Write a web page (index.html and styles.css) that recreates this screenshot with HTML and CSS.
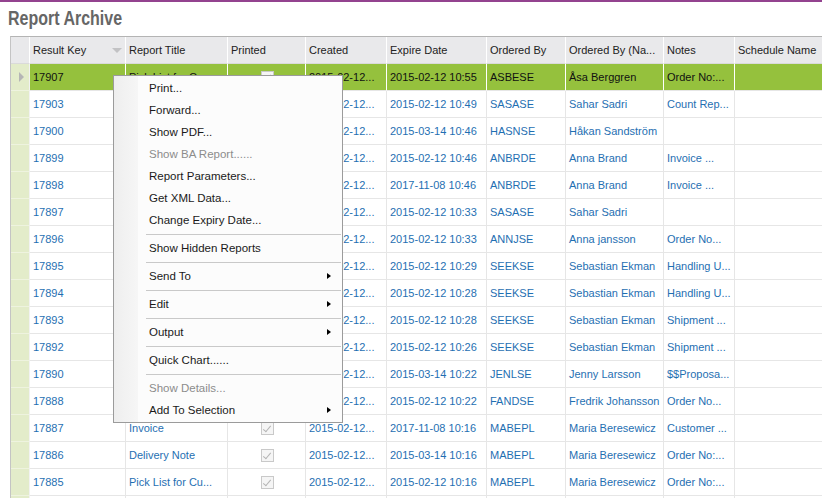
FILE: index.html
```html
<!DOCTYPE html>
<html lang="en">
<head>
    <meta charset="UTF-8">
    <title>Report Archive</title>
    <link rel="stylesheet" href="styles.css">
</head>
<body>
    <div class="page">
        <h1 class="title"><span>Report Archive</span></h1>
        <div class="grid">
            <div class="row head">
                <div class="gut"></div>
                <div class="sorted"><span>Result Key</span><i class="sort"></i></div>
                <div>Report Title</div>
                <div>Printed</div>
                <div>Created</div>
                <div>Expire Date</div>
                <div>Ordered By</div>
                <div>Ordered By (Na...</div>
                <div>Notes</div>
                <div class="last">Schedule Name</div>
            </div>
            <div class="row sel">
                <div class="gut"><i class="cur"></i></div>
                <div>17907</div>
                <div>Pick List for Cu...</div>
                <div class="chk"><span class="cb"></span></div>
                <div>2015-02-12...</div>
                <div>2015-02-12 10:55</div>
                <div>ASBESE</div>
                <div>Åsa Berggren</div>
                <div>Order No:...</div>
                <div class="last"></div>
            </div>
            <div class="row">
                <div class="gut"></div>
                <div>17903</div>
                <div>Count Report</div>
                <div class="chk"><span class="cb"></span></div>
                <div>2015-02-12...</div>
                <div>2015-02-12 10:49</div>
                <div>SASASE</div>
                <div>Sahar Sadri</div>
                <div>Count Rep...</div>
                <div class="last"></div>
            </div>
            <div class="row">
                <div class="gut"></div>
                <div>17900</div>
                <div>Delivery Note</div>
                <div class="chk"><span class="cb"></span></div>
                <div>2015-02-12...</div>
                <div>2015-03-14 10:46</div>
                <div>HASNSE</div>
                <div>Håkan Sandström</div>
                <div></div>
                <div class="last"></div>
            </div>
            <div class="row">
                <div class="gut"></div>
                <div>17899</div>
                <div>Invoice</div>
                <div class="chk"><span class="cb"></span></div>
                <div>2015-02-12...</div>
                <div>2015-02-12 10:46</div>
                <div>ANBRDE</div>
                <div>Anna Brand</div>
                <div>Invoice ...</div>
                <div class="last"></div>
            </div>
            <div class="row">
                <div class="gut"></div>
                <div>17898</div>
                <div>Invoice</div>
                <div class="chk"><span class="cb"></span></div>
                <div>2015-02-12...</div>
                <div>2017-11-08 10:46</div>
                <div>ANBRDE</div>
                <div>Anna Brand</div>
                <div>Invoice ...</div>
                <div class="last"></div>
            </div>
            <div class="row">
                <div class="gut"></div>
                <div>17897</div>
                <div>Count Report</div>
                <div class="chk"><span class="cb"></span></div>
                <div>2015-02-12...</div>
                <div>2015-02-12 10:33</div>
                <div>SASASE</div>
                <div>Sahar Sadri</div>
                <div></div>
                <div class="last"></div>
            </div>
            <div class="row">
                <div class="gut"></div>
                <div>17896</div>
                <div>Pick List for Cu...</div>
                <div class="chk"><span class="cb"></span></div>
                <div>2015-02-12...</div>
                <div>2015-02-12 10:33</div>
                <div>ANNJSE</div>
                <div>Anna jansson</div>
                <div>Order No...</div>
                <div class="last"></div>
            </div>
            <div class="row">
                <div class="gut"></div>
                <div>17895</div>
                <div>Handling Unit</div>
                <div class="chk"><span class="cb"></span></div>
                <div>2015-02-12...</div>
                <div>2015-02-12 10:29</div>
                <div>SEEKSE</div>
                <div>Sebastian Ekman</div>
                <div>Handling U...</div>
                <div class="last"></div>
            </div>
            <div class="row">
                <div class="gut"></div>
                <div>17894</div>
                <div>Handling Unit</div>
                <div class="chk"><span class="cb"></span></div>
                <div>2015-02-12...</div>
                <div>2015-02-12 10:28</div>
                <div>SEEKSE</div>
                <div>Sebastian Ekman</div>
                <div>Handling U...</div>
                <div class="last"></div>
            </div>
            <div class="row">
                <div class="gut"></div>
                <div>17893</div>
                <div>Shipment</div>
                <div class="chk"><span class="cb"></span></div>
                <div>2015-02-12...</div>
                <div>2015-02-12 10:28</div>
                <div>SEEKSE</div>
                <div>Sebastian Ekman</div>
                <div>Shipment ...</div>
                <div class="last"></div>
            </div>
            <div class="row">
                <div class="gut"></div>
                <div>17892</div>
                <div>Shipment</div>
                <div class="chk"><span class="cb"></span></div>
                <div>2015-02-12...</div>
                <div>2015-02-12 10:26</div>
                <div>SEEKSE</div>
                <div>Sebastian Ekman</div>
                <div>Shipment ...</div>
                <div class="last"></div>
            </div>
            <div class="row">
                <div class="gut"></div>
                <div>17890</div>
                <div>Proposal</div>
                <div class="chk"><span class="cb"></span></div>
                <div>2015-02-12...</div>
                <div>2015-03-14 10:22</div>
                <div>JENLSE</div>
                <div>Jenny Larsson</div>
                <div>$$Proposa...</div>
                <div class="last"></div>
            </div>
            <div class="row">
                <div class="gut"></div>
                <div>17888</div>
                <div>Order Confirm...</div>
                <div class="chk"><span class="cb"></span></div>
                <div>2015-02-12...</div>
                <div>2015-02-12 10:22</div>
                <div>FANDSE</div>
                <div>Fredrik Johansson</div>
                <div>Order No...</div>
                <div class="last"></div>
            </div>
            <div class="row">
                <div class="gut"></div>
                <div>17887</div>
                <div>Invoice</div>
                <div class="chk"><span class="cb"></span></div>
                <div>2015-02-12...</div>
                <div>2017-11-08 10:16</div>
                <div>MABEPL</div>
                <div>Maria Beresewicz</div>
                <div>Customer ...</div>
                <div class="last"></div>
            </div>
            <div class="row">
                <div class="gut"></div>
                <div>17886</div>
                <div>Delivery Note</div>
                <div class="chk"><span class="cb"></span></div>
                <div>2015-02-12...</div>
                <div>2015-03-14 10:16</div>
                <div>MABEPL</div>
                <div>Maria Beresewicz</div>
                <div>Order No:...</div>
                <div class="last"></div>
            </div>
            <div class="row">
                <div class="gut"></div>
                <div>17885</div>
                <div>Pick List for Cu...</div>
                <div class="chk"><span class="cb"></span></div>
                <div>2015-02-12...</div>
                <div>2015-02-12 10:16</div>
                <div>MABEPL</div>
                <div>Maria Beresewicz</div>
                <div>Order No:...</div>
                <div class="last"></div>
            </div>
            <div class="row">
                <div class="gut"></div>
                <div></div>
                <div></div>
                <div></div>
                <div></div>
                <div></div>
                <div></div>
                <div></div>
                <div></div>
                <div class="last"></div>
            </div>
        </div>
    </div>

    <div class="menu">
        <div class="item">Print...</div>
        <div class="item">Forward...</div>
        <div class="item">Show PDF...</div>
        <div class="item off">Show BA Report......</div>
        <div class="item">Report Parameters...</div>
        <div class="item">Get XML Data...</div>
        <div class="item">Change Expiry Date...</div>
        <div class="sep"></div>
        <div class="item">Show Hidden Reports</div>
        <div class="sep"></div>
        <div class="item sub">Send To<i></i></div>
        <div class="sep"></div>
        <div class="item sub">Edit<i></i></div>
        <div class="sep"></div>
        <div class="item sub">Output<i></i></div>
        <div class="sep"></div>
        <div class="item">Quick Chart......</div>
        <div class="sep"></div>
        <div class="item off">Show Details...</div>
        <div class="item sub">Add To Selection<i></i></div>
    </div>
</body>
</html>
```

FILE: styles.css
```css
html,
body {
    margin: 0;
    padding: 0;
}
body {
    font-family: "Liberation Sans", Arial, sans-serif;
    background: #fff;
    overflow: hidden;
    height: 498px;
}
.page {
    border-top: 2px solid #93438f;
}
.title {
    margin: 4px 0 0 8px;
    height: 30px;
    font-size: 20px;
    line-height: 24px;
    font-weight: bold;
    color: #666;
}
.title span {
    display: inline-block;
    transform: scaleX(0.8);
    transform-origin: left center;
}
.grid {
    margin-left: 10px;
    display: grid;
    grid-template-columns: 19px 96px 102px 78px 81px 100px 79px 98px 71px minmax(0, 1fr);
    border-top: 1px solid #b4b4b4;
    border-left: 1px solid #c4c4c4;
    font-size: 11px;
}
.row {
    display: contents;
}
.row > div {
    box-sizing: border-box;
    height: 27px;
    line-height: 26px;
    padding: 0 3px;
    white-space: nowrap;
    overflow: hidden;
    color: #1f6fb2;
    border-right: 1px solid #e6e6e6;
    border-bottom: 1px solid #e6e6e6;
}
.row > div.last {
    border-right: none;
}
.row > .gut {
    padding: 0;
    background: #e3ecca;
    border-right: 1px solid #f2f2f2;
    border-bottom: 1px solid #eef3df;
    display: flex;
    align-items: center;
    justify-content: center;
}
.head > div,
.head > .gut {
    background: #e9e9eb;
    color: #222;
    border-right: 1px solid #fff;
    border-bottom: 1px solid #dadada;
}
.sorted {
    display: flex;
    justify-content: space-between;
    align-items: center;
}
.sort {
    width: 0;
    height: 0;
    border-left: 5px solid transparent;
    border-right: 5px solid transparent;
    border-top: 5px solid #c2c2c4;
    margin-top: 1px;
}
.sel > div {
    background: #95c13d;
    color: #111;
    border-right-color: #fff;
}
.cur {
    width: 0;
    height: 0;
    border-top: 5px solid transparent;
    border-bottom: 5px solid transparent;
    border-left: 5px solid #b5b5b5;
    margin-left: 2px;
}
.row > .chk {
    display: flex;
    align-items: center;
    justify-content: center;
    padding: 0;
}
.cb {
    position: relative;
    box-sizing: border-box;
    width: 13px;
    height: 13px;
    border: 1px solid #c9c9c9;
    background: #f5f5f5;
    margin-left: 1px;
}
.cb::after {
    content: "";
    position: absolute;
    left: 3px;
    top: 1px;
    width: 3px;
    height: 7px;
    border-right: 1px solid #b4b4b4;
    border-bottom: 1px solid #b4b4b4;
    transform: rotate(40deg);
}

/* context menu */
.menu {
    position: absolute;
    left: 113px;
    top: 75px;
    width: 230px;
    box-sizing: border-box;
    padding: 1px 0;
    border: 1px solid #9b9b9b;
    background: linear-gradient(to right, #eeeeee 0, #f6f6f6 24px, #fcfcfc 24px);
    font-size: 11.5px;
    color: #1a1a1a;
}
.item {
    height: 22px;
    line-height: 22px;
    padding: 0 11px 0 35px;
    display: flex;
    justify-content: space-between;
    align-items: center;
    white-space: nowrap;
}
.item.off {
    color: #8c8c8c;
}
.sub i {
    width: 0;
    height: 0;
    border-top: 3.5px solid transparent;
    border-bottom: 3.5px solid transparent;
    border-left: 4px solid #000;
}
.sep {
    margin: 3px 1px 2px 32px;
    border-top: 1px solid #c9c9c9;
}
```
